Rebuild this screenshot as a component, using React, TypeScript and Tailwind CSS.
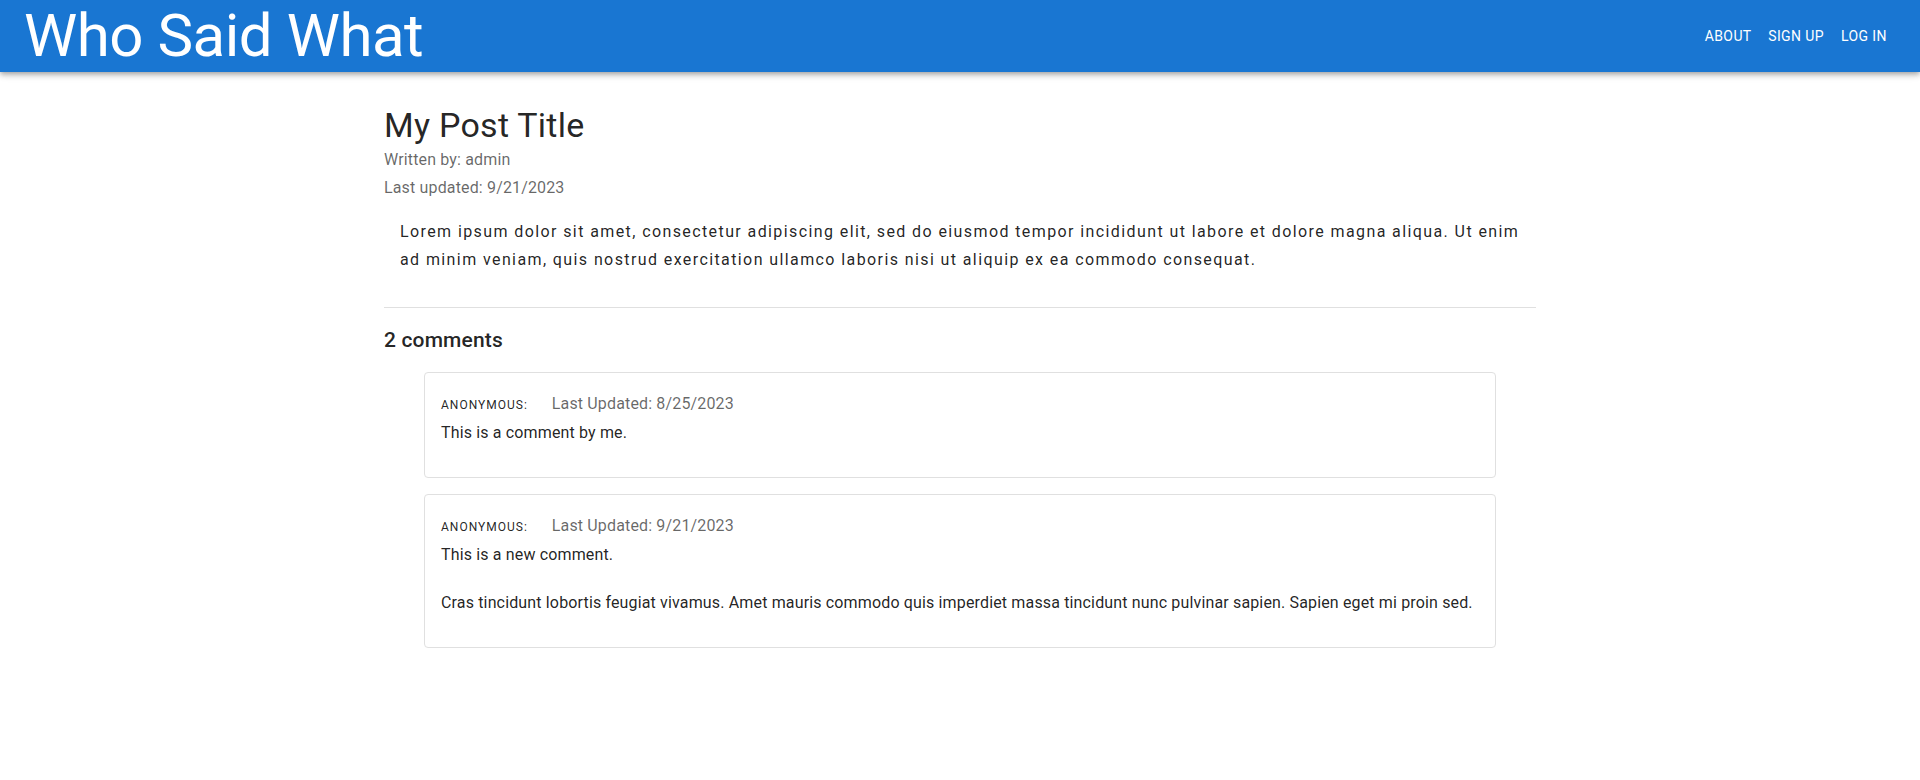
import React from "react";

const comments = [
  {
    author: "anonymous",
    updated: "8/25/2023",
    body: "This is a comment by me.",
  },
  {
    author: "anonymous",
    updated: "9/21/2023",
    body: "This is a new comment.\n\nCras tincidunt lobortis feugiat vivamus. Amet mauris commodo quis imperdiet massa tincidunt nunc pulvinar sapien. Sapien eget mi proin sed.",
  },
];

const App: React.FC = () => {
  return (
    <div className="min-h-[780px] bg-white font-['Roboto',sans-serif] text-[rgba(0,0,0,0.87)]">
      {/* App bar */}
      <header className="relative z-10 flex h-[72px] items-center justify-between bg-[#1976d2] px-6 text-white shadow-[0_2px_4px_-1px_rgba(0,0,0,0.2),0_4px_5px_0_rgba(0,0,0,0.14),0_1px_10px_0_rgba(0,0,0,0.12)]">
        <h1 className="text-[60px] font-normal leading-[72px] tracking-[-0.008em]">
          Who Said What
        </h1>
        <nav className="flex items-center">
          {["About", "Sign Up", "Log In"].map((label) => (
            <button
              key={label}
              className="min-w-16 rounded px-2 py-1.5 text-center text-[14px] font-normal uppercase leading-[24px] tracking-[0.02857em] text-white"
            >
              {label}
            </button>
          ))}
        </nav>
      </header>

      <main className="mx-auto max-w-[1200px] px-6 pt-8">
        <h2 className="text-[34px] font-normal leading-[42px] tracking-[0.00735em]">
          My Post Title
        </h2>
        <p className="text-[16px] leading-[28px] tracking-[0.00938em] text-[rgba(0,0,0,0.6)]">
          Written by: admin
        </p>
        <p className="text-[16px] leading-[28px] tracking-[0.00938em] text-[rgba(0,0,0,0.6)]">
          Last updated: 9/21/2023
        </p>

        <div className="p-4">
          <p className="text-[16px] leading-[28px] tracking-[1.4px]">
            Lorem ipsum dolor sit amet, consectetur adipiscing elit, sed do
            eiusmod tempor incididunt ut labore et dolore magna aliqua. Ut enim
            ad minim veniam, quis nostrud exercitation ullamco laboris nisi ut
            aliquip ex ea commodo consequat.
          </p>
        </div>

        <hr className="mt-[17px] border-0 border-b border-[rgba(0,0,0,0.12)]" />

        <h3 className="mt-4 text-[21px] font-medium leading-[32px] tracking-[0.0075em]">
          2 comments
        </h3>

        <div className="mx-10">
          {comments.map((c, i) => (
            <div
              key={i}
              className="mt-4 rounded border border-[#e0e0e0] bg-white p-4"
            >
              <div className="flex items-baseline gap-6">
                <span className="text-[12px] font-normal uppercase leading-[32px] tracking-[0.08333em]">
                  {c.author}:
                </span>
                <span className="text-[16px] leading-[24px] tracking-[0.00938em] text-[rgba(0,0,0,0.6)]">
                  Last Updated: {c.updated}
                </span>
              </div>
              <p className="mb-4 whitespace-pre-line text-[16px] leading-[24px] tracking-[0.00938em]">
                {c.body}
              </p>
            </div>
          ))}
        </div>
      </main>
    </div>
  );
};

export default App;
